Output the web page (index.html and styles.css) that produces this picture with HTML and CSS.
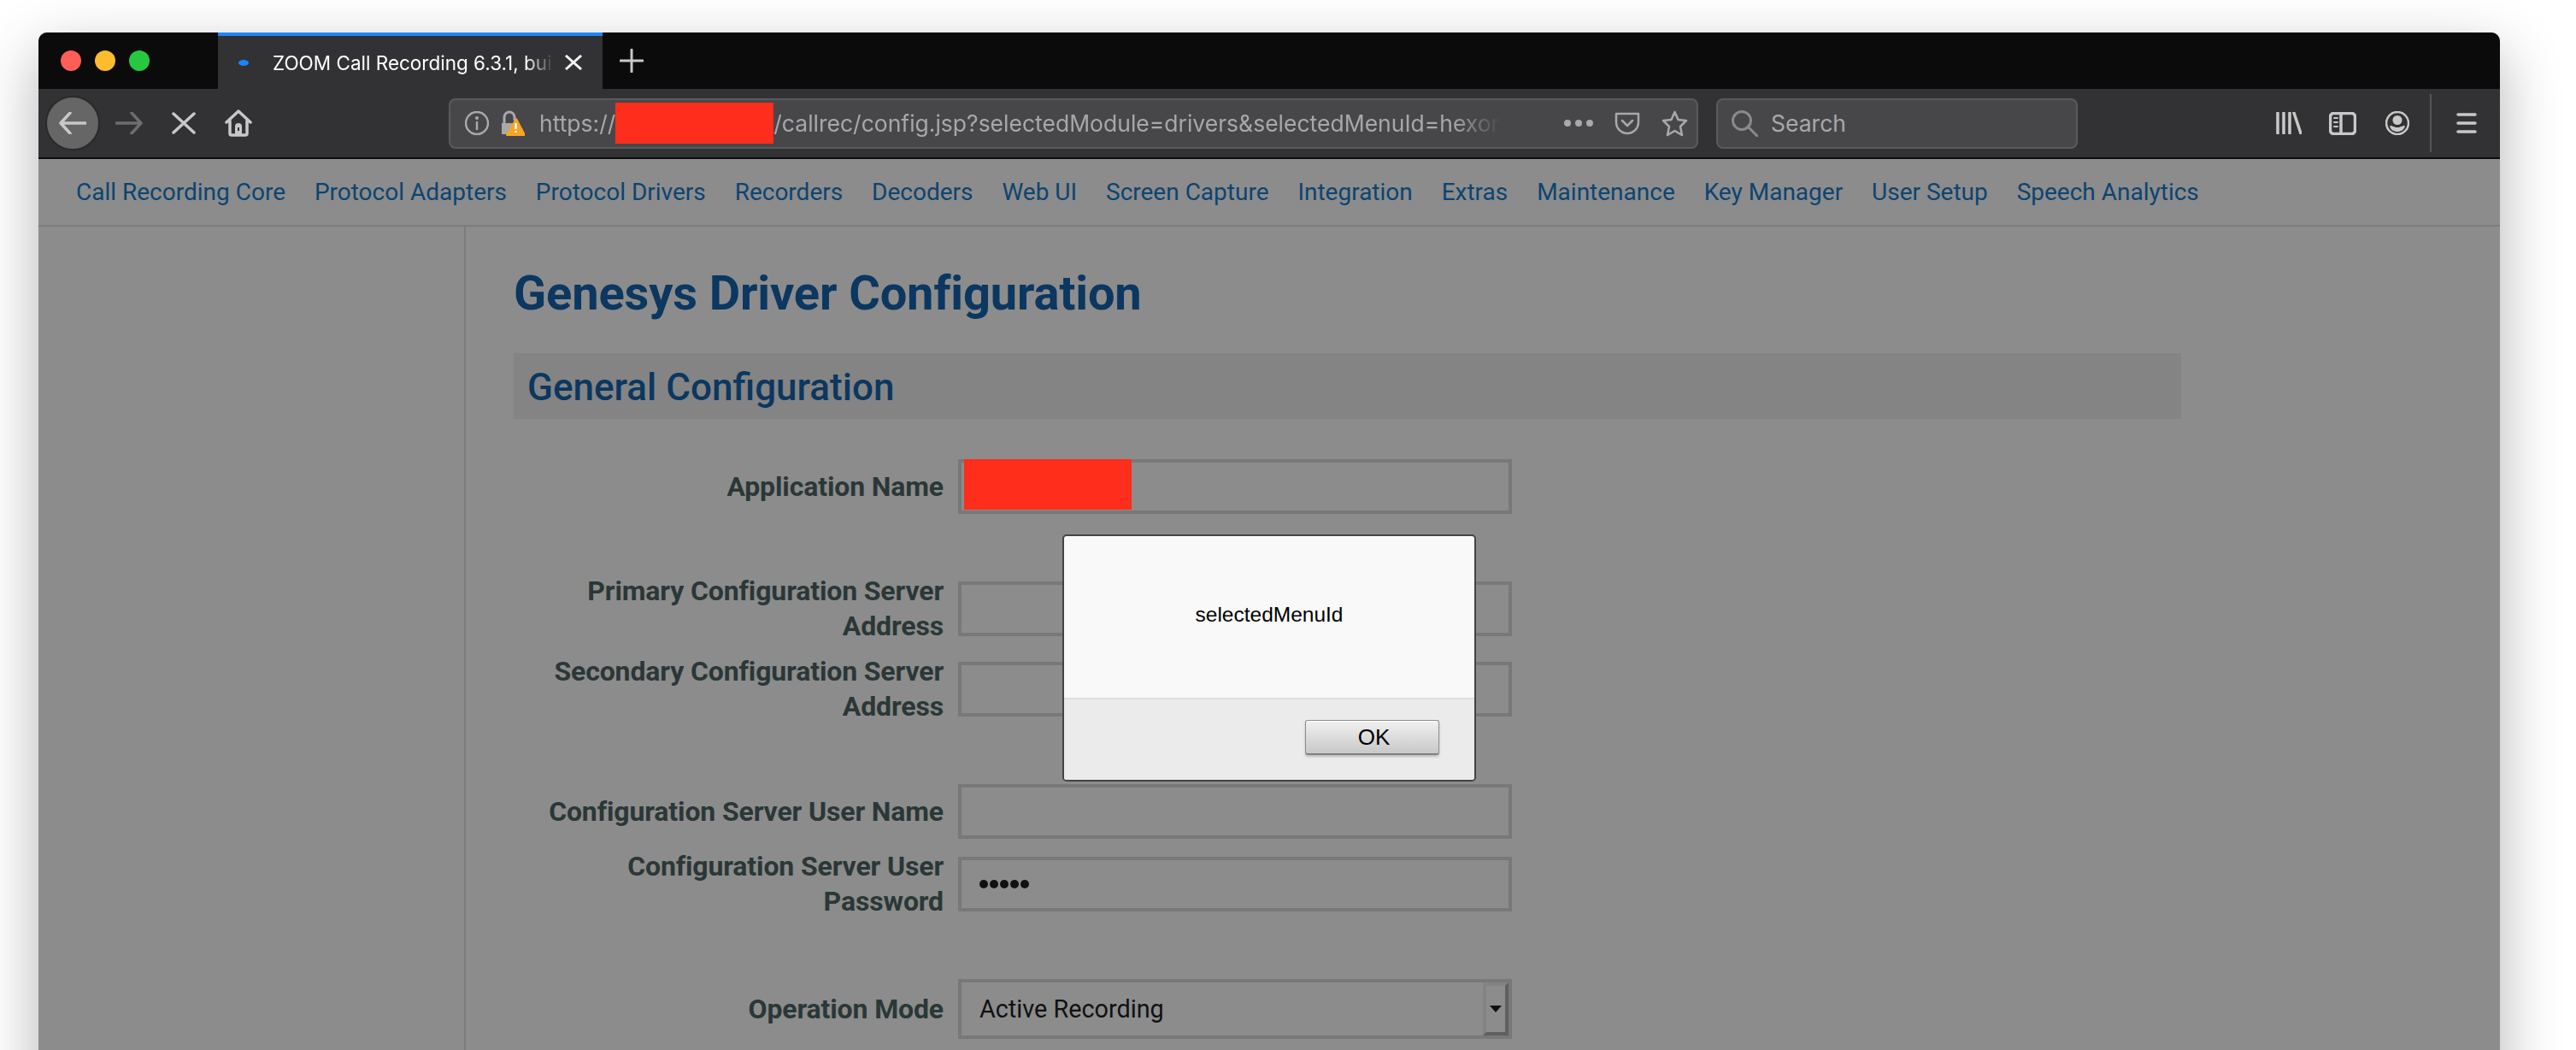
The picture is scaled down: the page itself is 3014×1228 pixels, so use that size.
FILE: index.html
```html
<!DOCTYPE html>
<html lang="en">

  <head>
    <meta charset="UTF-8">
    <meta name="viewport" content="width=device-width, initial-scale=1.0">
    <title>ZOOM Call Recording 6.3.1</title>
    <link rel="stylesheet" href="styles.css">
  </head>

  <body>
    <div class="window">

      <div class="tabbar">
        <div class="lights">
          <span class="light light-red"></span>
          <span class="light light-yellow"></span>
          <span class="light light-green"></span>
        </div>
        <div class="tab">
          <span class="tab-dot"></span>
          <span class="tab-title">ZOOM Call Recording 6.3.1, buil</span>
          <svg class="tab-close" width="20" height="18" viewBox="0 0 20 18"><path d="M1 1 19 17M19 1 1 17" /></svg>
        </div>
        <svg class="tab-new" width="28" height="28" viewBox="0 0 28 28"><path d="M14 1V27M1 14H27" /></svg>
      </div>

      <div class="navbar">
        <div class="back">
          <svg class="icon" width="32" height="26" viewBox="0 0 32 26"><path d="M31 13H2M13 1 2 13 13 25" /></svg>
        </div>
        <svg class="icon icon-dim forward" width="32" height="26" viewBox="0 0 32 26"><path d="M1 13H30M19 1 30 13 19 25" /></svg>
        <svg class="icon stop" width="28" height="26" viewBox="0 0 28 26"><path d="M2 2 26 24M26 2 2 24" /></svg>
        <svg class="icon home" width="32" height="32" viewBox="0 0 32 32"><path d="M2 15 16 2 30 15M6 13V28A2 2 0 0 0 8 30H24A2 2 0 0 0 26 28V13" /><path class="solid" d="M12 31V20A4 4 0 0 1 20 20V31ZM15 21V25H17V21Z" /></svg>

        <div class="urlbar">
          <svg class="icon-thin" width="28" height="28" viewBox="0 0 28 28"><circle cx="14" cy="14" r="13" /><path d="M14 13V21" /><circle class="solid" cx="14" cy="8" r="2" /></svg>
          <svg class="lock" width="28" height="30" viewBox="0 0 28 30">
            <path class="lock-body" d="M1 15H18V28H1Z" />
            <path class="lock-hoop" d="M4 15V8A6 6 0 0 1 16 8V12" />
            <path class="lock-warn" d="M18 10 28 29H7Z" />
            <path class="lock-mark" d="M17.500 15V22M17.500 24V26" />
          </svg>
          <div class="url">https://<span class="redact-url"></span>/callrec/config.jsp?selectedModule=drivers&amp;selectedMenuId=hexor</div>
          <span class="url-dots"><i></i><i></i><i></i></span>
          <svg class="icon-thin pocket" width="30" height="27" viewBox="0 0 30 27"><path d="M2 2H28V12A13 13 0 0 1 2 12Z" /><path d="M9 10 15 16 21 10" /></svg>
          <svg class="icon-thin star" width="31" height="31" viewBox="0 0 31 31"><path d="M15.500 2 19.500 11 29 12 22 19 24 29 15.500 24 7 29 9 19 2 12 11.500 11Z" /></svg>
        </div>

        <div class="searchbar">
          <svg class="search-icon" width="31" height="31" viewBox="0 0 31 31"><circle cx="12" cy="12" r="10.500" /><path d="M19 19 30 30" /></svg>
          <span>Search</span>
        </div>

        <svg class="icon library" width="30" height="26" viewBox="0 0 30 26"><path d="M2 1V25M9 1V25M16 1V25M21 1 29 25" /></svg>
        <svg class="icon sidebar" width="32" height="27" viewBox="0 0 32 27"><rect x="1.500" y="1.500" width="29" height="24" rx="4" /><path d="M14 2V25" /><path class="icon-small" d="M6 7H10M6 12H10M6 17H10" /></svg>
        <svg class="icon-thin profile" width="28" height="28" viewBox="0 0 28 28"><circle cx="14" cy="14" r="13" /><circle class="solid" cx="14" cy="10.500" r="5.500" /><path class="solid" d="M5 17C9 17 10 19 14 19 18 19 19 17 23 17 22 22 18 24 14 24 10 24 6 22 5 17Z" /></svg>
        <span class="nav-sep"></span>
        <svg class="icon hamburger" width="24" height="24" viewBox="0 0 24 24"><path d="M2 2H22M2 12H22M2 22H22" /></svg>
      </div>

      <nav class="menu">
        <a href="#">Call Recording Core</a>
        <a href="#">Protocol Adapters</a>
        <a href="#">Protocol Drivers</a>
        <a href="#">Recorders</a>
        <a href="#">Decoders</a>
        <a href="#">Web UI</a>
        <a href="#">Screen Capture</a>
        <a href="#">Integration</a>
        <a href="#">Extras</a>
        <a href="#">Maintenance</a>
        <a href="#">Key Manager</a>
        <a href="#">User Setup</a>
        <a href="#">Speech Analytics</a>
      </nav>

      <div class="page">
        <aside class="side"></aside>
        <main class="content">
          <h1>Genesys Driver Configuration</h1>
          <h2>General Configuration</h2>

          <div class="group">
            <div class="row">
              <label>Application Name</label>
              <div class="field"><span class="redact-field"></span></div>
            </div>
          </div>

          <div class="group">
            <div class="row">
              <label>Primary Configuration Server Address</label>
              <div class="field"></div>
            </div>
            <div class="row">
              <label>Secondary Configuration Server Address</label>
              <div class="field"></div>
            </div>
          </div>

          <div class="group">
            <div class="row">
              <label>Configuration Server User Name</label>
              <div class="field"></div>
            </div>
            <div class="row">
              <label>Configuration Server User Password</label>
              <div class="field field-pass"><i></i><i></i><i></i><i></i><i></i></div>
            </div>
          </div>

          <div class="group">
            <div class="row">
              <label>Operation Mode</label>
              <div class="field field-select">
                <span class="select-text">Active Recording</span>
                <span class="select-btn"></span>
              </div>
            </div>
          </div>
        </main>
      </div>

      <!-- alert box on top of the dimmed page -->
      <div class="dialog">
        <div class="dialog-msg">selectedMenuId</div>
        <div class="dialog-foot">
          <button class="dialog-ok">OK</button>
        </div>
      </div>

    </div>
  </body>

</html>
```

FILE: styles.css
```css
html,
body {
  margin: 0;
  height: 100%;
  overflow: hidden;
}

body {
  background: #fff;
  padding: 38px 89px 0 45px;
  font-family: Roboto, sans-serif;
}

.window {
  position: relative;
  width: 2880px;
  height: 1250px;
  border-radius: 10px 10px 0 0;
  overflow: hidden;
  background: #8c8c8c;
  box-shadow: 0 24px 70px rgba(0, 0, 0, 0.3);
}

/* tab strip */
.tabbar {
  display: flex;
  align-items: center;
  height: 66px;
  background: #0b0b0b;
}

.lights {
  display: flex;
  gap: 16px;
  width: 184px;
  padding-left: 26px;
}

.light {
  width: 24px;
  height: 24px;
  border-radius: 50%;
}

.light-red { background: #fd5f57; }
.light-yellow { background: #fdbc2e; }
.light-green { background: #27c840; }

.tab {
  display: flex;
  align-items: center;
  box-sizing: border-box;
  width: 450px;
  height: 66px;
  padding-left: 24px;
  background: #323234;
  border-top: 4px solid #1f86f9;
  color: #fff;
  font-family: Inter, sans-serif;
  font-size: 22.500px;
}

.tab-dot {
  width: 12px;
  height: 7px;
  border-radius: 50%;
  background: #1785ff;
  margin-right: 28px;
}

.tab-title {
  width: 329px;
  margin-right: 13px;
  white-space: nowrap;
  -webkit-mask-image: linear-gradient(to right, #000 90%, transparent);
  mask-image: linear-gradient(to right, #000 90%, transparent);
}

.tab-close path {
  fill: none;
  stroke: #f4f4f4;
  stroke-width: 3;
}

.tab-new {
  margin-left: 20px;
}

.tab-new path {
  fill: none;
  stroke: #c8c8c8;
  stroke-width: 3;
  stroke-linecap: round;
}

/* toolbar */
.navbar {
  display: flex;
  align-items: center;
  height: 80px;
  padding-left: 8px;
  background: #323234;
  border-bottom: 2px solid #0b0b0b;
}

.icon path,
.icon rect {
  fill: none;
  stroke: #c8c8c8;
  stroke-width: 3.500;
  stroke-linecap: round;
  stroke-linejoin: round;
}

.icon .solid,
.icon-thin .solid {
  fill: #c8c8c8;
  fill-rule: evenodd;
  stroke: none;
}

.icon-thin path,
.icon-thin circle {
  fill: none;
  stroke: #a9a9aa;
  stroke-width: 2.500;
  stroke-linecap: round;
  stroke-linejoin: round;
}

.icon-thin .solid {
  fill: #a9a9aa;
}

.icon-dim path {
  stroke: #6d6d6e;
}

.back {
  display: flex;
  align-items: center;
  justify-content: center;
  box-sizing: border-box;
  width: 64px;
  height: 64px;
  border-radius: 50%;
  background: #666667;
  border: 2px solid #2a2a2b;
}

.forward { margin-left: 18px; }
.stop { margin-left: 34px; }
.home { margin-left: 34px; }

.urlbar,
.searchbar {
  display: flex;
  align-items: center;
  box-sizing: border-box;
  height: 59px;
  background: #474749;
  border: 2px solid #5a5a5c;
  border-radius: 8px;
  color: #a8a8a9;
  font-family: Inter, sans-serif;
  font-size: 26.500px;
}

.urlbar {
  width: 1462px;
  margin-left: 230px;
  padding-left: 17px;
}

.lock {
  margin-left: 14px;
}

.lock-body { fill: #a9a9aa; }

.lock-hoop {
  fill: none;
  stroke: #a9a9aa;
  stroke-width: 3;
}

.lock-warn {
  fill: #f5a623;
  stroke: #f5a623;
  stroke-width: 2;
  stroke-linejoin: round;
}

.lock-mark {
  fill: none;
  stroke: #fff;
  stroke-width: 2.500;
}

.url {
  display: flex;
  align-items: center;
  width: 1125px;
  margin-left: 17px;
  white-space: nowrap;
  -webkit-mask-image: linear-gradient(to right, #000 95%, transparent);
  mask-image: linear-gradient(to right, #000 95%, transparent);
}

.redact-url {
  flex: none;
  width: 185px;
  height: 48px;
  background: #fe2d1c;
}

.url-dots {
  display: flex;
  gap: 5px;
  margin-left: 74px;
}

.url-dots i {
  width: 8px;
  height: 8px;
  border-radius: 50%;
  background: #a9a9aa;
}

.pocket { margin-left: 25px; }
.star { margin-left: 25px; }

.searchbar {
  width: 423px;
  margin-left: 21px;
  padding-left: 16px;
}

.search-icon {
  margin-right: 15px;
}

.search-icon circle,
.search-icon path {
  fill: none;
  stroke: #8a8a8b;
  stroke-width: 3;
  stroke-linecap: round;
}

.library { margin-left: 232px; }
.sidebar { margin-left: 32px; }
.profile { margin-left: 34px; }

.icon-small {
  stroke-width: 2 !important;
}

.profile circle:first-child {
  stroke: #c8c8c8;
}

.profile .solid {
  fill: #c8c8c8;
}

.nav-sep {
  width: 2px;
  height: 68px;
  margin-left: 24px;
  background: #555557;
}

.hamburger { margin-left: 29px; }

/* site menu */
.menu {
  display: flex;
  align-items: center;
  gap: 33.900px;
  height: 77px;
  padding-left: 44px;
  border-bottom: 2px solid #7a7c7e;
}

.menu a {
  color: #0c4470;
  font-size: 28px;
  text-decoration: none;
}

.page {
  display: flex;
}

.side {
  width: 498px;
  min-height: 970px;
  border-right: 2px solid #7c7c7c;
}

.content {
  width: 1951px;
  padding-left: 56px;
}

h1 {
  margin: 44px 0 0;
  color: #0b3760;
  font-size: 56px;
  letter-spacing: -0.130px;
  line-height: 68px;
}

h2 {
  margin: 36px 0 47px;
  padding: 4px 0 0 16px;
  background: #848484;
  color: #0b3760;
  font-size: 44px;
  font-weight: 500;
  line-height: 73px;
}

.group {
  display: flex;
  flex-direction: column;
  gap: 12px;
  margin-bottom: 70px;
}

.row {
  display: flex;
  align-items: center;
  gap: 17px;
}

.row label {
  width: 503px;
  color: #2b3737;
  font-size: 32px;
  font-weight: 700;
  letter-spacing: -0.130px;
  line-height: 41px;
  text-align: right;
}

.field {
  position: relative;
  display: flex;
  align-items: center;
  flex: none;
  box-sizing: border-box;
  width: 648px;
  height: 64px;
  padding-left: 21px;
  border: 4px solid #777977;
}

.redact-field {
  position: absolute;
  left: 3px;
  top: -4px;
  width: 196px;
  height: 59px;
  background: #fe2d1c;
}

.field-pass {
  gap: 2px;
}

.field-pass i {
  width: 10px;
  height: 10px;
  border-radius: 50%;
  background: #111;
}

.field-select {
  height: 70px;
}

.select-text {
  flex: 1;
  color: #111;
  font-size: 28.800px;
}

.select-btn {
  position: relative;
  box-sizing: border-box;
  width: 30px;
  height: 62px;
  border: 4px solid;
  border-color: #838383 #5f5f5f #5f5f5f #838383;
}

.select-btn::after {
  content: "";
  position: absolute;
  left: 4px;
  top: 23px;
  border-left: 7px solid transparent;
  border-right: 7px solid transparent;
  border-top: 8px solid #111;
}

/* alert dialog */
.dialog {
  position: absolute;
  left: 1198px;
  top: 587px;
  box-sizing: border-box;
  width: 484px;
  height: 289px;
  background: #f9f9f9;
  border: 2px solid #444;
  border-radius: 5px;
  overflow: hidden;
  font-family: "Liberation Sans", Arial, sans-serif;
}

.dialog-msg {
  display: flex;
  align-items: center;
  justify-content: center;
  box-sizing: border-box;
  height: 189px;
  padding-bottom: 5px;
  color: #000;
  font-size: 24.500px;
}

.dialog-foot {
  display: flex;
  justify-content: flex-end;
  height: 96px;
  padding: 24px 41px 0 0;
  box-sizing: border-box;
  background: #ebebeb;
  border-top: 2px solid #dedede;
}

.dialog-ok {
  width: 157px;
  height: 41px;
  padding: 0 0 0 4px;
  border: 1px solid #8c8c8c;
  border-bottom: 2px solid #808080;
  border-radius: 3px;
  background: linear-gradient(#f1f1f1, #c8c8c8);
  box-shadow: 0 2px 3px rgba(0, 0, 0, 0.2), inset 0 1px 0 #fff;
  color: #000;
  font-family: inherit;
  font-size: 26px;
}
```
